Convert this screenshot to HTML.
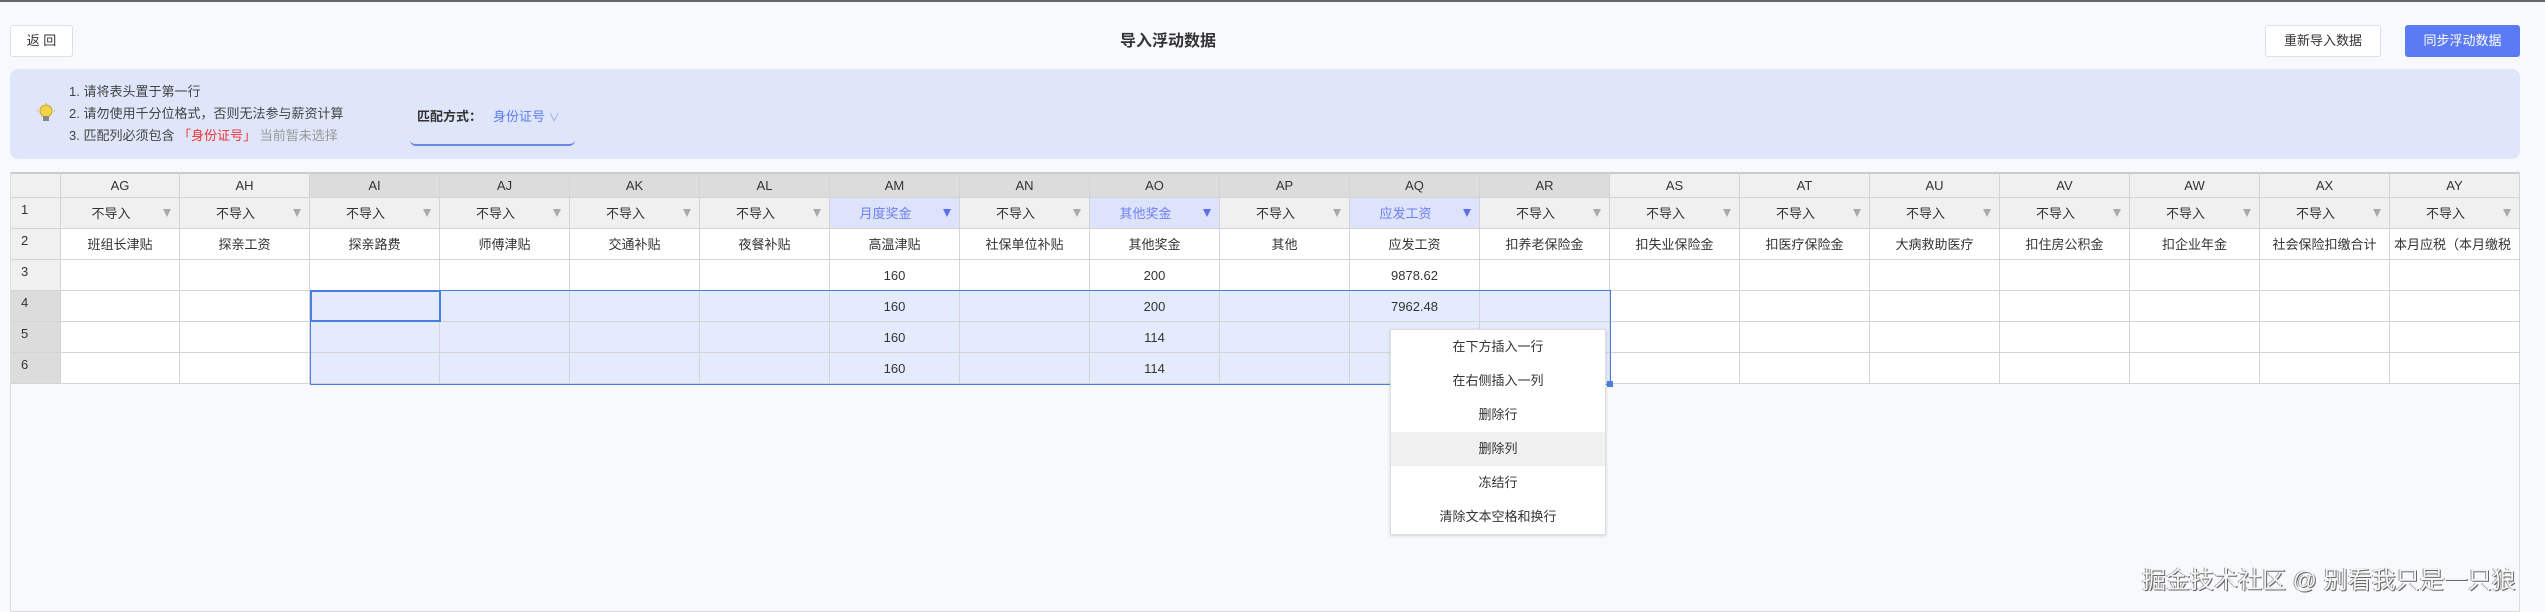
<!DOCTYPE html>
<html><head><meta charset="utf-8"><style>
*{box-sizing:border-box;margin:0;padding:0}
body{width:2545px;height:607px;background:#f7f9fc;font-family:"Liberation Sans","Noto Sans CJK SC",sans-serif;color:#333;position:relative;overflow:hidden;font-size:13px}
.topline{position:absolute;left:0;top:0;width:2545px;height:2px;background:#666}
.btn{position:absolute;top:25px;height:32px;border:1px solid #dcdfe6;border-radius:3px;background:#fff;font-size:13px;line-height:30px;text-align:center;color:#333}
.title{position:absolute;left:1120px;top:27px;font-size:16px;font-weight:bold;color:#333}
.notice{position:absolute;left:10px;top:69px;width:2510px;height:90px;background:#e0e6fa;border-radius:8px}
.ln{position:absolute;left:69px;font-size:13px;color:#444;line-height:16px}
.tbl{position:absolute;left:10px;top:172px;width:2510px;height:440px;border:1px solid #ddd;border-top:2px solid #ccc;background:#f7f9fc}
.c{position:absolute;border-right:1px solid #d4d4d4;border-bottom:1px solid #d4d4d4;text-align:center;font-size:13px;white-space:nowrap;overflow:hidden}
.tri{position:absolute;right:8px;top:11px;width:0;height:0;border-left:4px solid transparent;border-right:4px solid transparent;border-top:8px solid #aaa}
.menu{position:absolute;left:1390px;top:329px;width:216px;height:206px;background:#fff;border:1px solid #ddd;box-shadow:0 1px 3px rgba(0,0,0,.15)}
.mi{height:34px;line-height:34px;text-align:center;font-size:13px;color:#333}
</style></head><body>
<div class="topline"></div>
<div class="btn" style="left:10px;width:63px">返 回</div>
<div class="title">导入浮动数据</div>
<div class="btn" style="left:2265px;width:116px">重新导入数据</div>
<div class="btn" style="left:2405px;width:115px;background:#5b7bf5;border-color:#5b7bf5;color:#fff">同步浮动数据</div>
<div class="notice"></div>
<svg style="position:absolute;left:37px;top:103px" width="18" height="22" viewBox="0 0 18 22"><circle cx="9" cy="8" r="6" fill="#f3d34a" stroke="#c9a52a"/><rect x="6" y="13" width="6" height="5" fill="#888"/><g stroke="#d8b33a" stroke-width="1.2"><line x1="1" y1="8" x2="-1" y2="8"/><line x1="17" y1="8" x2="19" y2="8"/><line x1="9" y1="0" x2="9" y2="1"/></g></svg>
<div class="ln" style="top:84px">1. 请将表头置于第一行</div>
<div class="ln" style="top:106px">2. 请勿使用千分位格式，否则无法参与薪资计算</div>
<div class="ln" style="top:128px">3. 匹配列必须包含 <span style="color:#e33">「身份证号」</span> <span style="color:#999">当前暂未选择</span></div>
<div style="position:absolute;left:417px;top:106px;font-size:13px;font-weight:bold;color:#333">匹配方式：</div>
<div style="position:absolute;left:493px;top:106px;font-size:13px;color:#5b7bf5">身份证号 <span style="color:#8aa0f0;font-size:11px">∨</span></div>
<div style="position:absolute;left:410px;top:138px;width:165px;height:8px;border-bottom:2px solid #6a86e8;border-radius:0 0 6px 6px"></div>
<div class="tbl"></div>
<div id="g"></div>
<div class="menu">
<div class="mi">在下方插入一行</div><div class="mi">在右侧插入一列</div><div class="mi">删除行</div><div class="mi" style="background:#f0f0f0">删除列</div><div class="mi">冻结行</div><div class="mi">清除文本空格和换行</div>
</div>
<div style="position:absolute;left:2142px;top:560px;font-size:24px;color:#f4f4f4;text-shadow:1px 1px 0 #666,-1px 0 0 #999;white-space:nowrap">掘金技术社区 @ 别看我只是一只狼</div>
<script>
var cols=["AG","AH","AI","AJ","AK","AL","AM","AN","AO","AP","AQ","AR","AS","AT","AU","AV","AW","AX","AY"];
var names=["班组长津贴","探亲工资","探亲路费","师傅津贴","交通补贴","夜餐补贴","高温津贴","社保单位补贴","其他奖金","其他","应发工资","扣养老保险金","扣失业保险金","扣医疗保险金","大病救助医疗","扣住房公积金","扣企业年金","社会保险扣缴合计","本月应税（本月缴税"];
var hl={6:"月度奖金",8:"其他奖金",10:"应发工资"};
var data={3:{6:"160",8:"200",10:"9878.62"},4:{6:"160",8:"200",10:"7962.48"},5:{6:"160",8:"114"},6:{6:"160",8:"114"}};
var rows=[174,198,229,260,291,322,353,384];
var h="";
function cell(x,y,w,hh,bg,txt,st){h+='<div class="c" style="left:'+x+'px;top:'+y+'px;width:'+w+'px;height:'+hh+'px;line-height:'+hh+'px;background:'+bg+';'+(st||'')+'">'+txt+'</div>';}
cell(11,174,50,24,"#f0f0f0","");
for(var r=1;r<=6;r++){var y=rows[r],hh=rows[r+1]-y;cell(11,y,50,hh,r>=4?"#dcdcdc":"#f0f0f0",r,"text-align:left;padding-left:10px;line-height:"+(hh-8)+"px");}
for(var i=0;i<19;i++){
 var x=i==0?61:180+(i-1)*130,w=i==0?119:130;
 var sel=i>=2&&i<=11;
 cell(x,174,w,24,sel?"#dcdcdc":"#f0f0f0",cols[i]);
 if(hl[i]){h+='<div class="c" style="left:'+x+'px;top:198px;width:'+w+'px;height:31px;line-height:31px;background:#dde3fb;color:#6b7ff0;padding-right:18px">'+hl[i]+'<div class="tri" style="border-top-color:#5b6ff0"></div></div>';}
 else{h+='<div class="c" style="left:'+x+'px;top:198px;width:'+w+'px;height:31px;line-height:31px;background:#f0f0f0;padding-right:18px">不导入<div class="tri"></div></div>';}
 cell(x,229,w,31,"#fff",names[i],i==18?"text-align:left;padding-left:4px":"");
 for(var r=3;r<=6;r++){var y=rows[r];cell(x,y,w,31,(sel&&r>=4)?"#e3ebfd":"#fff",(data[r]&&data[r][i])||"");}
}
h+='<div style="position:absolute;left:310px;top:290px;width:1301px;height:95px;border:1px solid #4a7de0"></div>';
h+='<div style="position:absolute;left:310px;top:290px;width:131px;height:32px;border:2px solid #4a7de0"></div>';
h+='<div style="position:absolute;left:1607px;top:381px;width:6px;height:6px;background:#4a7de0"></div>';
document.getElementById("g").innerHTML=h;
</script>
</body></html>
